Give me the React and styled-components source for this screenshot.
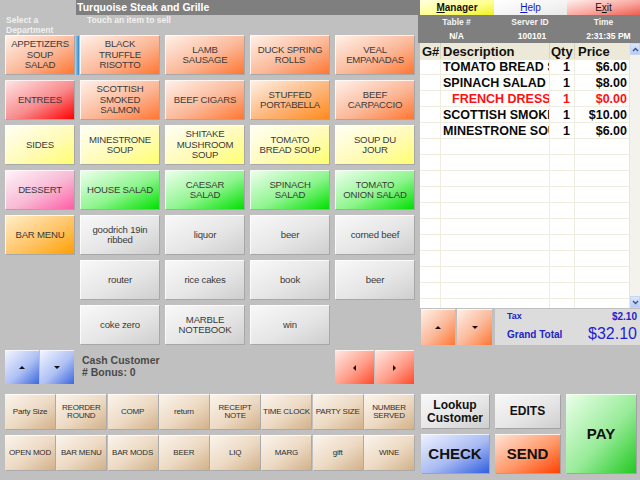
import React from "react";
import styled, { createGlobalStyle, css } from "styled-components";

const GlobalStyle = createGlobalStyle`
  html, body {
    margin: 0;
    padding: 0;
    background: #c0c0c0;
    font-family: "Liberation Sans", Arial, sans-serif;
  }
`;

const tones = {
  orange: ["#fff0e8", "#fbb898", "#ff7631"],
  amberish: ["#fff0e4", "#fdb57a", "#ff8a1c"],
  red: ["#ffe4e4", "#f88a8c", "#ff0000"],
  yellow: ["#fffff4", "#fffbb8", "#ffff6e"],
  pink: ["#fff3f8", "#f8b8d4", "#ff5ca6"],
  green: ["#ecffec", "#8ef58e", "#00e000"],
  amber: ["#ffeec8", "#ffc466", "#ff9f00"],
  gray: ["#f8f8f8", "#e6e6e6", "#cecece"],
  tan: ["#fbf4ec", "#ecd9c2", "#d2b189"],
  blue: ["#f2f5ff", "#aec0f4", "#3b68df"],
  salmon: ["#ffe8e2", "#ff9f8b", "#ff4a2a"],
  yellowBar: ["#ffffe0", "#ffff90", "#f0f020"],
  white: ["#ffffff", "#f4f4f4", "#e8e8e8"],
  exit: ["#fff0ee", "#f9a8a0", "#ee5c50"],
  pay: ["#eaffea", "#98eb98", "#22c922"],
  send: ["#ffe4d8", "#ff9868", "#ff4000"],
  check: ["#eef2ff", "#a8baf2", "#2f5ee0"],
};

const shade = (tone) => {
  const [a, b, c] = tones[tone];
  return css`
    background: linear-gradient(to bottom right, ${a} 0%, ${b} 55%, ${c} 100%);
  `;
};

const Screen = styled.div`
  width: 640px;
  height: 480px;
  display: grid;
  grid-template-columns: 418px 222px;
  background: #c0c0c0;
  overflow: hidden;
`;

/* ---------- left side ---------- */

const Left = styled.div`
  display: flex;
  flex-direction: column;
`;

const TitleBar = styled.div`
  height: 15px;
  margin-left: 76px;
  background: #7f7f7f;
  color: #fff;
  font-weight: bold;
  font-size: 10.5px;
  line-height: 15px;
  padding-left: 1px;
`;

const Hints = styled.div`
  height: 20px;
  display: flex;
  color: #f0f0f0;
  font-weight: bold;
  font-size: 8.5px;
  line-height: 10px;
`;

const Hint = styled.div`
  width: ${(p) => p.$w}px;
  padding-left: ${(p) => p.$pad}px;
`;

const MenuGrid = styled.div`
  display: grid;
  grid-template-columns: 69px repeat(4, 79px);
  grid-template-rows: repeat(7, 39px);
  column-gap: 6px;
  row-gap: 6px;
  padding-left: 5px;
`;

const Tile = styled.div`
  position: relative;
  ${(p) => shade(p.$tone)};
  border-top: 1px solid rgba(255, 255, 255, 0.9);
  border-left: 1px solid rgba(255, 255, 255, 0.9);
  box-shadow: 1px 1px 0 rgba(120, 120, 120, 0.35);
  display: flex;
  align-items: center;
  justify-content: center;
  text-align: center;
  color: #3a3a3a;
  font-size: 9.6px;
  line-height: 10.5px;
  letter-spacing: -0.2px;
  box-sizing: border-box;
  padding: 0 ${(p) => p.$pad}px;
  grid-column: ${(p) => p.$col};
  grid-row: ${(p) => p.$row};
  ${(p) =>
    p.$marker &&
    css`
      &::before {
        content: "";
        position: absolute;
        left: -5px;
        top: 0;
        width: 3px;
        height: 39px;
        background: linear-gradient(to right, #8fc2e8, #2f86c8);
      }
    `}
`;

const NavRow = styled.div`
  height: 34px;
  margin-top: 6px;
  padding: 0 4px 0 5px;
  display: flex;
  align-items: stretch;
`;

const ArrowPair = styled.div`
  display: flex;
  gap: 1px;
`;

const ArrowBtn = styled.div`
  width: ${(p) => p.$w}px;
  ${(p) => shade(p.$tone)};
  border-top: 1px solid rgba(255, 255, 255, 0.9);
  box-sizing: border-box;
  display: flex;
  align-items: center;
  justify-content: center;
`;

const Tri = styled.span`
  width: 0;
  height: 0;
  ${(p) =>
    p.$dir === "up" &&
    css`
      border-left: 3px solid transparent;
      border-right: 3px solid transparent;
      border-bottom: 3px solid #111;
    `}
  ${(p) =>
    p.$dir === "down" &&
    css`
      border-left: 3px solid transparent;
      border-right: 3px solid transparent;
      border-top: 3px solid #111;
    `}
  ${(p) =>
    p.$dir === "left" &&
    css`
      border-top: 3px solid transparent;
      border-bottom: 3px solid transparent;
      border-right: 3px solid #111;
    `}
  ${(p) =>
    p.$dir === "right" &&
    css`
      border-top: 3px solid transparent;
      border-bottom: 3px solid transparent;
      border-left: 3px solid #111;
    `}
`;

const Customer = styled.div`
  flex: 1;
  padding: 4px 0 0 8px;
  color: #4a4a4a;
  font-weight: bold;
  font-size: 10.5px;
  line-height: 12px;
`;

const FuncGrid = styled.div`
  margin-top: 10px;
  padding: 0 4px 0 5px;
  display: grid;
  grid-template-columns: repeat(8, 1fr);
  grid-template-rows: 35px 35px;
  column-gap: 1.3px;
  row-gap: 6px;
`;

const FuncBtn = styled.div`
  ${shade("tan")};
  border-top: 1px solid rgba(255, 255, 255, 0.9);
  box-shadow: 1px 1px 0 rgba(120, 120, 120, 0.3);
  display: flex;
  align-items: center;
  justify-content: center;
  text-align: center;
  color: #2e2e2e;
  font-size: 8px;
  line-height: 8px;
  letter-spacing: -0.2px;
`;

/* ---------- right side ---------- */

const Right = styled.div`
  display: flex;
  flex-direction: column;
`;

const TopButtons = styled.div`
  height: 15px;
  background: #7f7f7f;
  padding-left: 2px;
  display: grid;
  grid-template-columns: 74px 73px 73px;
`;

const TopBtn = styled.div`
  ${(p) => shade(p.$tone)};
  text-align: center;
  font-size: 10px;
  line-height: 15px;
  font-weight: ${(p) => (p.$bold ? "bold" : "normal")};
  color: ${(p) => p.$color || "#111"};
  u {
    text-decoration: underline;
  }
`;

const InfoBar = styled.div`
  height: 28px;
  background: #7f7f7f;
  padding-left: 2px;
  display: grid;
  grid-template-columns: 73px 74px 73px;
  grid-template-rows: 14px 14px;
  color: #f4f4f4;
  font-weight: bold;
  font-size: 8.5px;
  text-align: center;
  align-items: center;
`;

const InfoValue = styled.div`
  color: #fff;
  font-weight: bold;
  padding-left: ${(p) => p.$shift || 0}px;
`;

const TicketBox = styled.div`
  position: relative;
  height: 265px;
  margin-left: 2px;
  background: #fff;
  overflow: hidden;
`;

const TicketTable = styled.div`
  display: grid;
  grid-template-columns: 21px 109px 25px 55px;
  grid-auto-rows: 16px;
  width: 210px;
`;

const HeadCell = styled.div`
  height: 17px;
  background: #ece9d8;
  border-right: 1px solid #d8d4c0;
  font-weight: bold;
  font-size: 13px;
  line-height: 17px;
  color: #111;
  padding-left: ${(p) => p.$pad || 2}px;
  box-sizing: border-box;
`;

const Cell = styled.div`
  border-right: 1px solid #efece0;
  border-bottom: 1px solid #efece0;
  box-sizing: border-box;
  font-weight: bold;
  font-size: 12.5px;
  line-height: 16px;
  color: ${(p) => (p.$red ? "#ff1010" : "#0a0a0a")};
  white-space: nowrap;
  overflow: hidden;
  text-overflow: clip;
  text-align: ${(p) => p.$align || "left"};
  padding-left: ${(p) => p.$pad || 0}px;
  padding-right: ${(p) => p.$padR || 0}px;
`;

const ScrollTrack = styled.div`
  position: absolute;
  right: 0;
  top: 0;
  bottom: 0;
  width: 10px;
  background: #f3f2ec;
  border-left: 1px solid #e8e6dc;
  display: flex;
  flex-direction: column;
  justify-content: space-between;
`;

const ScrollArrow = styled.div`
  height: 12px;
  background: linear-gradient(#dce6fc, #b8cbf4);
  border: 1px solid #c8d6f6;
  box-sizing: border-box;
  display: flex;
  align-items: center;
  justify-content: center;
  svg {
    display: block;
  }
`;

const TotalsRow = styled.div`
  height: 36px;
  margin-top: 1px;
  padding-left: 3px;
  display: flex;
  gap: 2px;
`;

const TotalsPanel = styled.div`
  flex: 1;
  margin-left: 1px;
  background: #dcdcdc;
  color: #2323c8;
  display: grid;
  grid-template-columns: 1fr auto;
  grid-template-rows: 14px 22px;
  padding: 0 3px 0 12px;
  font-weight: bold;
`;

const TotLabel = styled.div`
  font-size: ${(p) => p.$size}px;
  align-self: center;
`;

const TotValue = styled.div`
  text-align: right;
  align-self: center;
  font-size: ${(p) => p.$size}px;
  font-weight: ${(p) => (p.$light ? "normal" : "bold")};
  color: ${(p) => (p.$light ? "#1e1ed8" : "#2323c8")};
`;

const ActionGrid = styled.div`
  margin-top: 49px;
  padding-left: 3px;
  display: grid;
  grid-template-columns: 68px 65px 70px;
  grid-template-rows: 34px 39px;
  column-gap: 6px;
  row-gap: 6px;
`;

const ActionBtn = styled.div`
  ${(p) => shade(p.$tone)};
  border-top: 1px solid rgba(255, 255, 255, 0.9);
  box-shadow: 1px 1px 0 rgba(110, 110, 110, 0.35);
  grid-column: ${(p) => p.$col};
  grid-row: ${(p) => p.$row};
  display: flex;
  align-items: center;
  justify-content: center;
  text-align: center;
  font-weight: bold;
  color: #111;
  font-size: ${(p) => p.$size}px;
  line-height: ${(p) => p.$size + 1}px;
`;

const departments = [
  { label: ["APPETIZERS", "SOUP", "SALAD"], tone: "orange" },
  { label: ["ENTREES"], tone: "red" },
  { label: ["SIDES"], tone: "yellow" },
  { label: ["DESSERT"], tone: "pink" },
  { label: ["BAR MENU"], tone: "amber" },
];

const items = [
  ["BLACK TRUFFLE RISOTTO", "orange"],
  ["LAMB SAUSAGE", "orange"],
  ["DUCK SPRING ROLLS", "orange"],
  ["VEAL EMPANADAS", "orange"],
  ["SCOTTISH SMOKED SALMON", "orange"],
  ["BEEF CIGARS", "orange"],
  ["STUFFED PORTABELLA", "amberish"],
  ["BEEF CARPACCIO", "orange"],
  ["MINESTRONE SOUP", "yellow"],
  ["SHITAKE MUSHROOM SOUP", "yellow"],
  ["TOMATO BREAD SOUP", "yellow"],
  ["SOUP DU JOUR", "yellow"],
  ["HOUSE SALAD", "green"],
  ["CAESAR SALAD", "green"],
  ["SPINACH SALAD", "green"],
  ["TOMATO ONION SALAD", "green"],
  ["goodrich 19in ribbed", "gray"],
  ["liquor", "gray"],
  ["beer", "gray"],
  ["corned beef", "gray"],
  ["router", "gray"],
  ["rice cakes", "gray"],
  ["book", "gray"],
  ["beer", "gray"],
  ["coke zero", "gray"],
  ["MARBLE NOTEBOOK", "gray"],
  ["win", "gray"],
];

const functions = [
  "Party Size",
  "REORDER ROUND",
  "COMP",
  "return",
  "RECEIPT NOTE",
  "TIME CLOCK",
  "PARTY SIZE",
  "NUMBER SERVED",
  "OPEN MOD",
  "BAR MENU",
  "BAR MODS",
  "BEER",
  "LIQ",
  "MARG",
  "gift",
  "WINE",
];

const orderLines = [
  { desc: "TOMATO BREAD SOUP", qty: 1, price: "$6.00" },
  { desc: "SPINACH SALAD", qty: 1, price: "$8.00" },
  { desc: "FRENCH DRESSING", qty: 1, price: "$0.00", mod: true },
  { desc: "SCOTTISH SMOKED SALMON", qty: 1, price: "$10.00" },
  { desc: "MINESTRONE SOUP", qty: 1, price: "$6.00" },
];

const Chevron = ({ up }) => (
  <svg width="7" height="5" viewBox="0 0 7 5">
    <path
      d={up ? "M1 4 L3.5 1.5 L6 4" : "M1 1 L3.5 3.5 L6 1"}
      fill="none"
      stroke="#3a4f86"
      strokeWidth="1.3"
    />
  </svg>
);

export default function App() {
  const blankRows = Array.from({ length: 11 });

  return (
    <>
      <GlobalStyle />
      <Screen>
        <Left>
          <TitleBar>Turquoise Steak and Grille</TitleBar>
          <Hints>
            <Hint $w={76} $pad={6}>
              Select a
              <br />
              Department
            </Hint>
            <Hint $pad={5}>Touch an item to sell</Hint>
          </Hints>

          <MenuGrid>
            {departments.map((d, i) => (
              <Tile key={i} $tone={d.tone} $col={1} $row={i + 1} $pad={2}>
                <span>
                  {d.label.map((line, j) => (
                    <React.Fragment key={j}>
                      {j > 0 && <br />}
                      {line}
                    </React.Fragment>
                  ))}
                </span>
              </Tile>
            ))}
            {items.map(([label, tone], i) => (
              <Tile
                key={i}
                $tone={tone}
                $col={(i % 4) + 2}
                $row={Math.floor(i / 4) + 1}
                $pad={5}
                $marker={i === 0}
              >
                {label}
              </Tile>
            ))}
          </MenuGrid>

          <NavRow>
            <ArrowPair>
              <ArrowBtn $w={34} $tone="blue">
                <Tri $dir="up" />
              </ArrowBtn>
              <ArrowBtn $w={34} $tone="blue">
                <Tri $dir="down" />
              </ArrowBtn>
            </ArrowPair>
            <Customer>
              Cash Customer
              <br /># Bonus: 0
            </Customer>
            <ArrowPair>
              <ArrowBtn $w={39} $tone="salmon">
                <Tri $dir="left" />
              </ArrowBtn>
              <ArrowBtn $w={39} $tone="salmon">
                <Tri $dir="right" />
              </ArrowBtn>
            </ArrowPair>
          </NavRow>

          <FuncGrid>
            {functions.map((f, i) => (
              <FuncBtn key={i}>{f}</FuncBtn>
            ))}
          </FuncGrid>
        </Left>

        <Right>
          <TopButtons>
            <TopBtn $tone="yellowBar" $bold>
              <u>M</u>anager
            </TopBtn>
            <TopBtn $tone="white" $color="#1515c8">
              <u>H</u>elp
            </TopBtn>
            <TopBtn $tone="exit">
              E<u>x</u>it
            </TopBtn>
          </TopButtons>

          <InfoBar>
            <div>Table #</div>
            <div>Server ID</div>
            <div>Time</div>
            <InfoValue>N/A</InfoValue>
            <InfoValue $shift={4}>100101</InfoValue>
            <InfoValue $shift={10}>2:31:35 PM</InfoValue>
          </InfoBar>

          <TicketBox>
            <TicketTable>
              <HeadCell>G#</HeadCell>
              <HeadCell>Description</HeadCell>
              <HeadCell $pad={1}>Qty</HeadCell>
              <HeadCell $pad={3}>Price</HeadCell>
              {orderLines.map((l, i) => (
                <React.Fragment key={i}>
                  <Cell />
                  <Cell $red={l.mod} $pad={l.mod ? 11 : 2}>
                    {l.desc}
                  </Cell>
                  <Cell $red={l.mod} $align="right" $padR={4}>
                    {l.qty}
                  </Cell>
                  <Cell $red={l.mod} $align="right" $padR={2}>
                    {l.price}
                  </Cell>
                </React.Fragment>
              ))}
              {blankRows.map((_, i) => (
                <React.Fragment key={"b" + i}>
                  <Cell />
                  <Cell />
                  <Cell />
                  <Cell />
                </React.Fragment>
              ))}
            </TicketTable>
            <ScrollTrack>
              <ScrollArrow>
                <Chevron up />
              </ScrollArrow>
              <ScrollArrow>
                <Chevron />
              </ScrollArrow>
            </ScrollTrack>
          </TicketBox>

          <TotalsRow>
            <ArrowBtn $w={34} $tone="orange">
              <Tri $dir="up" />
            </ArrowBtn>
            <ArrowBtn $w={35} $tone="orange">
              <Tri $dir="down" />
            </ArrowBtn>
            <TotalsPanel>
              <TotLabel $size={9}>Tax</TotLabel>
              <TotValue $size={10}>$2.10</TotValue>
              <TotLabel $size={10}>Grand Total</TotLabel>
              <TotValue $size={16} $light>
                $32.10
              </TotValue>
            </TotalsPanel>
          </TotalsRow>

          <ActionGrid>
            <ActionBtn $tone="gray" $size={12} $col={1} $row={1}>
              Lookup
              <br />
              Customer
            </ActionBtn>
            <ActionBtn $tone="gray" $size={12} $col={2} $row={1}>
              EDITS
            </ActionBtn>
            <ActionBtn $tone="pay" $size={15} $col={3} $row="1 / span 2">
              PAY
            </ActionBtn>
            <ActionBtn $tone="check" $size={15} $col={1} $row={2}>
              CHECK
            </ActionBtn>
            <ActionBtn $tone="send" $size={15} $col={2} $row={2}>
              SEND
            </ActionBtn>
          </ActionGrid>
        </Right>
      </Screen>
    </>
  );
}
